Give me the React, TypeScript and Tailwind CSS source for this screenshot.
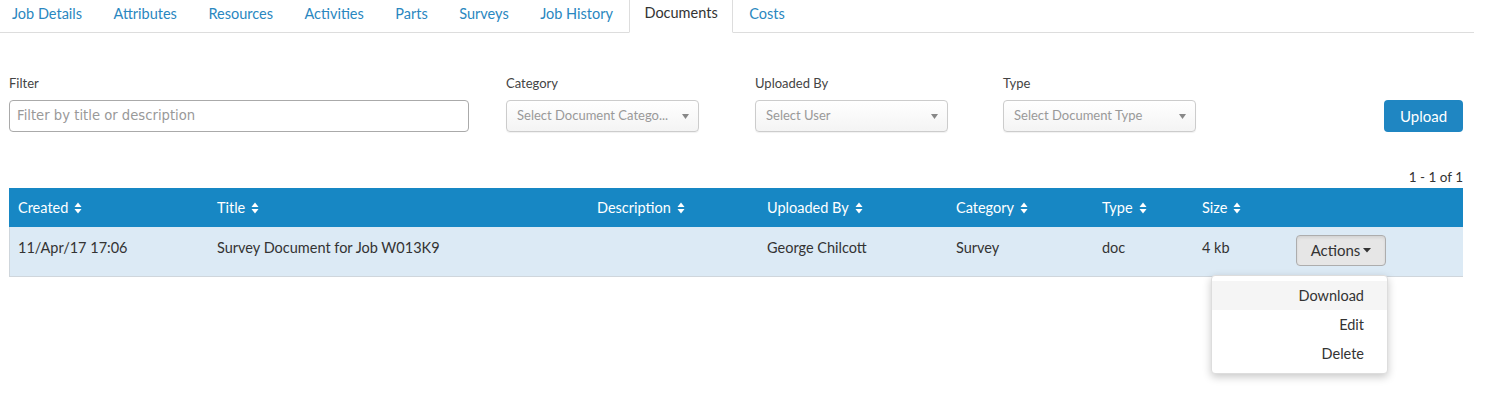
import { ReactNode } from "react";

const tabs = ["Job Details", "Attributes", "Resources", "Activities", "Parts", "Surveys", "Job History", "Documents", "Costs"];

const columns = ["Created", "Title", "Description", "Uploaded By", "Category", "Type", "Size"];

const gridCols = "grid grid-cols-[199px_380px_170px_189px_146px_100px_94px_176px]";

function SortIcon() {
    return (
        <svg width="8" height="12" viewBox="0 0 8 12" className="ml-[6px] inline-block">
            <path d="M4 0.5 L7.5 5 L0.5 5 Z" fill="white" />
            <path d="M4 11.5 L7.5 7 L0.5 7 Z" fill="white" />
        </svg>
    );
}

function Field({ label, children, className }: { label: string; children: ReactNode; className?: string }) {
    return (
        <div className={className}>
            <div className="text-[13px] text-[#444] leading-5 h-5 mb-[7px]">{label}</div>
            {children}
        </div>
    );
}

function FakeSelect({ placeholder }: { placeholder: string }) {
    return (
        <div className="h-[32px] w-[193px] flex items-center justify-between pl-[10px] pr-[9px] rounded-[4px] border border-[#ccc] bg-gradient-to-b from-white to-[#f4f4f4] shadow-[0_1px_1px_rgba(0,0,0,0.06)]">
            <span className="text-[13px] text-[#999] whitespace-nowrap">{placeholder}</span>
            <svg width="7" height="5" viewBox="0 0 7 5">
                <path d="M0 0 L7 0 L3.5 5 Z" fill="#888" />
            </svg>
        </div>
    );
}

export default function App() {
    return (
        <div className="w-[1474px] bg-white font-['Lato',sans-serif] text-[#333]">
            {/* tabs */}
            <ul className="flex h-[33px] border-b border-[#ddd] -ml-[3px]">
                {tabs.map((t) => {
                    const active = t === "Documents";
                    return (
                        <li key={t} className="mr-[1.5px]">
                            <a
                                className={
                                    active
                                        ? "block h-[33px] px-[14px] pt-[2.5px] text-[14.5px] leading-5 text-[#333] bg-white border border-[#ddd] border-b-white border-t-0"
                                        : "block h-[33px] px-[14px] pt-[2.5px] text-[14.5px] leading-5 text-[#2a87c0] border border-transparent"
                                }
                            >
                                {t}
                            </a>
                        </li>
                    );
                })}
            </ul>

            {/* filters */}
            <div className="flex items-end pl-[9px] pr-[11px] mt-[40px]">
                <Field label="Filter" className="w-[460px]">
                    <div className="h-[32px] rounded-[4px] border border-[#aaa] flex items-center pl-[7px]">
                        <span className="font-[family-name:'DejaVu_Sans',sans-serif] text-[13.2px] text-[#999]">Filter by title or description</span>
                    </div>
                </Field>
                <Field label="Category" className="ml-[37px]">
                    <FakeSelect placeholder="Select Document Catego..." />
                </Field>
                <Field label="Uploaded By" className="ml-[56px]">
                    <FakeSelect placeholder="Select User" />
                </Field>
                <Field label="Type" className="ml-[55px]">
                    <FakeSelect placeholder="Select Document Type" />
                </Field>
                <div className="flex-1 flex justify-end">
                    <button className="h-[32px] w-[79px] rounded-[4px] bg-[#1f86c2] text-white text-[15px]">Upload</button>
                </div>
            </div>

            {/* table */}
            <div className="pl-[9px] pr-[11px]">
                <div className="text-right text-[13.5px] leading-5 mt-[35px] h-[21px]">1 - 1 of 1</div>
                <div className={`${gridCols} h-[39px] items-center bg-[#1787c4] text-white text-[14.5px]`}>
                    {columns.map((c) => (
                        <div key={c} className="pl-[9px] flex items-center">
                            {c}
                            <SortIcon />
                        </div>
                    ))}
                    <div />
                </div>
                <div className={`${gridCols} h-[50px] bg-[#dceaf5] border-b border-l border-[#cfd6dc] text-[14.5px] text-[#333]`}>
                    <div className="pl-[8px] pt-[10px]">11/Apr/17 17:06</div>
                    <div className="pl-[8px] pt-[10px]">Survey Document for Job W013K9</div>
                    <div className="pl-[8px] pt-[10px]"></div>
                    <div className="pl-[8px] pt-[10px]">George Chilcott</div>
                    <div className="pl-[8px] pt-[10px]">Survey</div>
                    <div className="pl-[8px] pt-[10px]">doc</div>
                    <div className="pl-[8px] pt-[10px]">4 kb</div>
                    <div className="pl-[8px] pt-[8px] relative">
                        <button className="h-[31px] w-[90px] rounded-[4px] border border-[#adadad] bg-[#e6e6e6] text-[15px] text-[#333] flex items-center justify-center shadow-[inset_0_2px_3px_rgba(0,0,0,0.08)]">
                            Actions
                            <svg width="8" height="5" viewBox="0 0 8 5" className="ml-[3px]">
                                <path d="M0 0 L8 0 L4 4.5 Z" fill="#333" />
                            </svg>
                        </button>
                        {/* dropdown menu */}
                        <div className="absolute left-[-77px] top-[48px] w-[177px] py-[5px] bg-white rounded-[4px] border border-[#ddd] shadow-[0_3px_8px_rgba(0,0,0,0.22)] text-[14.5px] text-[#333] z-10">
                            <div className="h-[29px] leading-[29px] text-right pr-[23px] bg-[#f5f5f5]">Download</div>
                            <div className="h-[29px] leading-[29px] text-right pr-[23px]">Edit</div>
                            <div className="h-[29px] leading-[29px] text-right pr-[23px]">Delete</div>
                        </div>
                    </div>
                </div>
            </div>
            <div className="h-[120px]" />
        </div>
    );
}
